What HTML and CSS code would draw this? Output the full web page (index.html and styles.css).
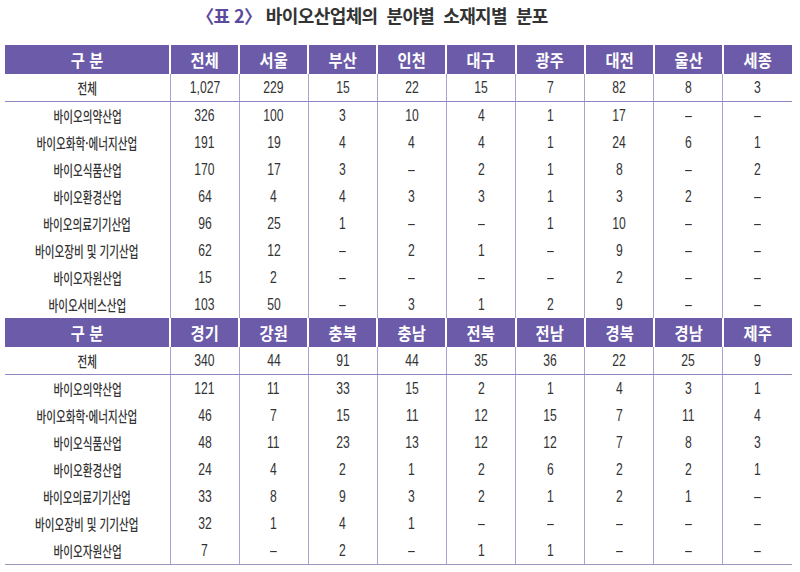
FILE: index.html
```html
<!DOCTYPE html>
<html lang="ko">
<head>
<meta charset="utf-8">
<title>표 2 바이오산업체의 분야별 소재지별 분포</title>
<link rel="stylesheet" href="styles.css">
</head>
<body>
<h1 class="title"><span class="no">〈표&nbsp;2〉</span> 바이오산업체의&nbsp; 분야별&nbsp; 소재지별&nbsp; 분포</h1>
<table class="grid">
<colgroup><col class="c0"><col span="9"></colgroup>
<tbody>
<tr class="head"><th><span class="h">구&nbsp;분</span></th><th><span class="h">전체</span></th><th><span class="h">서울</span></th><th><span class="h">부산</span></th><th><span class="h">인천</span></th><th><span class="h">대구</span></th><th><span class="h">광주</span></th><th><span class="h">대전</span></th><th><span class="h">울산</span></th><th><span class="h">세종</span></th></tr>
<tr class="total"><td><span class="k">전체</span></td><td><span class="n">1,027</span></td><td><span class="n">229</span></td><td><span class="n">15</span></td><td><span class="n">22</span></td><td><span class="n">15</span></td><td><span class="n">7</span></td><td><span class="n">82</span></td><td><span class="n">8</span></td><td><span class="n">3</span></td></tr>
<tr><td><span class="k">바이오의약산업</span></td><td><span class="n">326</span></td><td><span class="n">100</span></td><td><span class="n">3</span></td><td><span class="n">10</span></td><td><span class="n">4</span></td><td><span class="n">1</span></td><td><span class="n">17</span></td><td><span class="n">–</span></td><td><span class="n">–</span></td></tr>
<tr><td><span class="k">바이오화학·에너지산업</span></td><td><span class="n">191</span></td><td><span class="n">19</span></td><td><span class="n">4</span></td><td><span class="n">4</span></td><td><span class="n">4</span></td><td><span class="n">1</span></td><td><span class="n">24</span></td><td><span class="n">6</span></td><td><span class="n">1</span></td></tr>
<tr><td><span class="k">바이오식품산업</span></td><td><span class="n">170</span></td><td><span class="n">17</span></td><td><span class="n">3</span></td><td><span class="n">–</span></td><td><span class="n">2</span></td><td><span class="n">1</span></td><td><span class="n">8</span></td><td><span class="n">–</span></td><td><span class="n">2</span></td></tr>
<tr><td><span class="k">바이오환경산업</span></td><td><span class="n">64</span></td><td><span class="n">4</span></td><td><span class="n">4</span></td><td><span class="n">3</span></td><td><span class="n">3</span></td><td><span class="n">1</span></td><td><span class="n">3</span></td><td><span class="n">2</span></td><td><span class="n">–</span></td></tr>
<tr><td><span class="k">바이오의료기기산업</span></td><td><span class="n">96</span></td><td><span class="n">25</span></td><td><span class="n">1</span></td><td><span class="n">–</span></td><td><span class="n">–</span></td><td><span class="n">1</span></td><td><span class="n">10</span></td><td><span class="n">–</span></td><td><span class="n">–</span></td></tr>
<tr><td><span class="k">바이오장비 및 기기산업</span></td><td><span class="n">62</span></td><td><span class="n">12</span></td><td><span class="n">–</span></td><td><span class="n">2</span></td><td><span class="n">1</span></td><td><span class="n">–</span></td><td><span class="n">9</span></td><td><span class="n">–</span></td><td><span class="n">–</span></td></tr>
<tr><td><span class="k">바이오자원산업</span></td><td><span class="n">15</span></td><td><span class="n">2</span></td><td><span class="n">–</span></td><td><span class="n">–</span></td><td><span class="n">–</span></td><td><span class="n">–</span></td><td><span class="n">2</span></td><td><span class="n">–</span></td><td><span class="n">–</span></td></tr>
<tr><td><span class="k">바이오서비스산업</span></td><td><span class="n">103</span></td><td><span class="n">50</span></td><td><span class="n">–</span></td><td><span class="n">3</span></td><td><span class="n">1</span></td><td><span class="n">2</span></td><td><span class="n">9</span></td><td><span class="n">–</span></td><td><span class="n">–</span></td></tr>
</tbody>
<tbody class="last">
<tr class="head"><th><span class="h">구&nbsp;분</span></th><th><span class="h">경기</span></th><th><span class="h">강원</span></th><th><span class="h">충북</span></th><th><span class="h">충남</span></th><th><span class="h">전북</span></th><th><span class="h">전남</span></th><th><span class="h">경북</span></th><th><span class="h">경남</span></th><th><span class="h">제주</span></th></tr>
<tr class="total"><td><span class="k">전체</span></td><td><span class="n">340</span></td><td><span class="n">44</span></td><td><span class="n">91</span></td><td><span class="n">44</span></td><td><span class="n">35</span></td><td><span class="n">36</span></td><td><span class="n">22</span></td><td><span class="n">25</span></td><td><span class="n">9</span></td></tr>
<tr><td><span class="k">바이오의약산업</span></td><td><span class="n">121</span></td><td><span class="n">11</span></td><td><span class="n">33</span></td><td><span class="n">15</span></td><td><span class="n">2</span></td><td><span class="n">1</span></td><td><span class="n">4</span></td><td><span class="n">3</span></td><td><span class="n">1</span></td></tr>
<tr><td><span class="k">바이오화학·에너지산업</span></td><td><span class="n">46</span></td><td><span class="n">7</span></td><td><span class="n">15</span></td><td><span class="n">11</span></td><td><span class="n">12</span></td><td><span class="n">15</span></td><td><span class="n">7</span></td><td><span class="n">11</span></td><td><span class="n">4</span></td></tr>
<tr><td><span class="k">바이오식품산업</span></td><td><span class="n">48</span></td><td><span class="n">11</span></td><td><span class="n">23</span></td><td><span class="n">13</span></td><td><span class="n">12</span></td><td><span class="n">12</span></td><td><span class="n">7</span></td><td><span class="n">8</span></td><td><span class="n">3</span></td></tr>
<tr><td><span class="k">바이오환경산업</span></td><td><span class="n">24</span></td><td><span class="n">4</span></td><td><span class="n">2</span></td><td><span class="n">1</span></td><td><span class="n">2</span></td><td><span class="n">6</span></td><td><span class="n">2</span></td><td><span class="n">2</span></td><td><span class="n">1</span></td></tr>
<tr><td><span class="k">바이오의료기기산업</span></td><td><span class="n">33</span></td><td><span class="n">8</span></td><td><span class="n">9</span></td><td><span class="n">3</span></td><td><span class="n">2</span></td><td><span class="n">1</span></td><td><span class="n">2</span></td><td><span class="n">1</span></td><td><span class="n">–</span></td></tr>
<tr><td><span class="k">바이오장비 및 기기산업</span></td><td><span class="n">32</span></td><td><span class="n">1</span></td><td><span class="n">4</span></td><td><span class="n">1</span></td><td><span class="n">–</span></td><td><span class="n">–</span></td><td><span class="n">–</span></td><td><span class="n">–</span></td><td><span class="n">–</span></td></tr>
<tr><td><span class="k">바이오자원산업</span></td><td><span class="n">7</span></td><td><span class="n">–</span></td><td><span class="n">2</span></td><td><span class="n">–</span></td><td><span class="n">1</span></td><td><span class="n">1</span></td><td><span class="n">–</span></td><td><span class="n">–</span></td><td><span class="n">–</span></td></tr>
</tbody>
</table>
</body>
</html>
```

FILE: styles.css
```css
html, body {
  margin: 0;
  padding: 0;
  background: #ffffff;
}

body {
  font-family: "Noto Sans CJK KR", "Noto Sans", sans-serif;
  color: #333333;
}

.title {
  margin: 0 0 15px 0;
  padding: 2px 56px 0 0;
  height: 28px;
  line-height: 26px;
  text-align: center;
  font-size: 18px;
  font-weight: bold;
  color: #333333;
  letter-spacing: -0.6px;
}

.title .no {
  color: #5b4b9f;
}

.grid {
  margin-left: 5px;
  width: 787px;
  border-collapse: collapse;
  table-layout: fixed;
}

.grid col.c0 {
  width: 165px;
}

.grid th {
  height: 29px;
  padding: 0;
  background: #6b5ba8;
  color: #ffffff;
  font-weight: bold;
  font-size: 17px;
  line-height: 20px;
  border-left: 2px solid #ffffff;
  text-align: center;
}

.grid th:first-child {
  border-left: 0;
}

.grid td {
  height: 27px;
  padding: 0;
  text-align: center;
  line-height: 20px;
  border-left: 1px solid #aaa2d3;
  font-family: "Liberation Sans", Arial, sans-serif;
  font-size: 16px;
  color: #333333;
}

.grid td:first-child {
  border-left: 0;
  font-family: "Noto Sans CJK KR", "Noto Sans", sans-serif;
  font-size: 14.5px;
  font-weight: 500;
}

.grid tr.total td {
  border-bottom: 1px solid #8f85c2;
}

.grid tbody.last tr:last-child td {
  border-bottom: 1px solid #9c96bd;
}

.h {
  display: inline-block;
  transform: scaleX(0.9);
}

.k {
  display: inline-block;
  white-space: nowrap;
  transform: scaleX(0.73);
}

.n {
  display: inline-block;
  transform: scaleX(0.76);
}
```
